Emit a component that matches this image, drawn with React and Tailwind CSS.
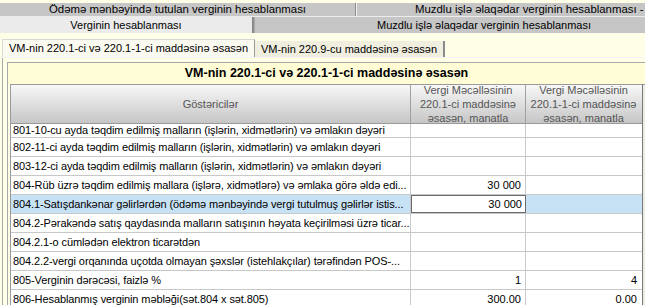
import React from "react";

const rows = [
  { label: "801-10-cu ayda təqdim edilmiş malların (işlərin, xidmətlərin) və əmlakın dəyəri", a: "", b: "", first: true },
  { label: "802-11-ci ayda təqdim edilmiş malların (işlərin, xidmətlərin) və əmlakın dəyəri", a: "", b: "" },
  { label: "803-12-ci ayda təqdim edilmiş malların (işlərin, xidmətlərin) və əmlakın dəyəri", a: "", b: "" },
  { label: "804-Rüb üzrə təqdim edilmiş mallara (işlərə, xidmətlərə) və əmlaka görə əldə edi...", a: "30 000", b: "" },
  { label: "804.1-Satışdankənar gəlirlərdən (ödəmə mənbəyində vergi tutulmuş gəlirlər istis...", a: "30 000", b: "", selected: true },
  { label: "804.2-Pərakəndə satış qaydasında malların satışının həyata keçirilməsi üzrə ticar...", a: "", b: "" },
  { label: "804.2.1-o cümlədən elektron ticarətdən", a: "", b: "" },
  { label: "804.2.2-vergi orqanında uçotda olmayan şəxslər (istehlakçılar) tərəfindən POS-...", a: "", b: "" },
  { label: "805-Verginin dərəcəsi, faizlə %", a: "1", b: "4" },
  { label: "806-Hesablanmış verginin məbləği(sət.804 x sət.805)", a: "300.00", b: "0.00" },
];

function GridRow({ row }) {
  const bg = row.selected ? "bg-[#c8e2f5]" : "bg-white";
  return (
    <div className={`flex ${row.first ? "h-[14px]" : "h-[19px]"} border-b border-[#c8c8c8] ${bg}`}>
      <div className="w-[400px] shrink-0 border-r border-[#c8c8c8] pl-[2px] flex items-center overflow-hidden whitespace-nowrap tracking-[-0.1px]">
        {row.label}
      </div>
      {row.selected ? (
        <div className="w-[115px] shrink-0 flex items-center justify-end pr-[3px] bg-white border border-[#6a6a6a]">
          {row.a}
        </div>
      ) : (
        <div className="w-[115px] shrink-0 border-r border-[#c8c8c8] flex items-center justify-end pr-[4px]">
          {row.a}
        </div>
      )}
      <div className="w-[115px] shrink-0 flex items-center justify-end pr-[4px]">{row.b}</div>
    </div>
  );
}

export default function App() {
  return (
    <div
      className="w-[645px] h-[305px] overflow-hidden bg-[#fffee6] text-[11px] text-black flex flex-col"
      style={{ fontFamily: "Tahoma, 'Liberation Sans', Arial, sans-serif" }}
    >
      {/* outer tabs, row 1 */}
      <div className="h-[3px] shrink-0" />
      <div className="flex h-[13px] shrink-0 bg-[#c6c6c6] leading-[13px] text-[11.4px] whitespace-nowrap overflow-hidden">
        <div className="w-[355px] shrink-0 text-center">Ödəmə mənbəyində tutulan verginin hesablanması</div>
        <div className="w-[1px] shrink-0 bg-[#8c8c8c]" />
        <div className="w-[1px] shrink-0 bg-[#f2f2f2]" />
        <div className="flex-1 pl-[58px] overflow-hidden">Muzdlu işlə əlaqədar verginin hesablanması - yer</div>
      </div>

      {/* outer tabs, row 2 */}
      <div className="flex h-[17px] shrink-0 border-t border-[#ececec] leading-[16px] whitespace-nowrap overflow-hidden">
        <div className="w-[252px] shrink-0 bg-[#ebebeb] text-center">Verginin hesablanması</div>
        <div className="w-[3px] shrink-0 bg-linear-to-r from-[#7a7a7a] to-[#b0b0b0]" />
        <div className="flex-1 bg-[#c6c6c6] pl-[122px]">Muzdlu işlə əlaqədar verginin hesablanması</div>
      </div>

      <div className="h-[7px] shrink-0" />

      {/* inner tabs */}
      <div className="flex items-end h-[18px] shrink-0 pl-[2px] border-b border-[#f4f4f4] whitespace-nowrap">
        <div className="w-[253px] h-[18px] shrink-0 bg-[#fbfaf1] border-t border-l border-[#d8d8d8] border-r border-r-[#9a9a9a] flex items-center justify-center">
          VM-nin 220.1-ci və 220.1-1-ci maddəsinə əsasən
        </div>
        <div className="w-[190px] h-[16px] shrink-0 bg-[#efeedf] border-r-2 border-[#8a8a8a] flex items-center justify-center">
          VM-nin 220.9-cu maddəsinə əsasən
        </div>
      </div>

      {/* tab page */}
      <div className="flex-1 ml-[2px] border-l border-[#a8a8a8] pl-[4px] pt-[4px] min-h-0">
        <div className="border-l border-t border-[#a8a8a8] h-full flex flex-col">
          <div className="h-[21px] shrink-0 bg-[#fffcd6] flex items-center justify-center font-bold text-[12.5px] whitespace-nowrap">
            VM-nin 220.1-ci və 220.1-1-ci maddəsinə əsasən
          </div>
          <div className="flex flex-1 min-h-0 pl-[2px]">
            <div className="w-[632px] shrink-0 border-l border-t border-[#9a9a9a] overflow-hidden">
              {/* header */}
              <div className="flex h-[39px] bg-linear-to-b from-[#f8f8f8] to-[#c6c6c6] text-[#555] border-b border-[#9a9a9a]">
                <div className="w-[400px] shrink-0 border-r border-[#a0a0a0] flex items-center justify-center">
                  Göstəricilər
                </div>
                <div className="w-[115px] shrink-0 border-r border-[#a0a0a0] flex flex-col items-center justify-center leading-[14px]">
                  <span>Vergi Məcəlləsinin</span>
                  <span>220.1-ci maddəsinə</span>
                  <span>əsasən, manatla</span>
                </div>
                <div className="w-[115px] shrink-0 flex flex-col items-center justify-center leading-[14px]">
                  <span>Vergi Məcəlləsinin</span>
                  <span>220.1-1-ci maddəsinə</span>
                  <span>əsasən, manatla</span>
                </div>
              </div>
              {rows.map((r) => (
                <GridRow key={r.label} row={r} />
              ))}
            </div>
            <div className="flex-1 border-l border-[#7a7a7a] bg-[#ecebe4] border-t border-t-[#9a9a9a]" />
          </div>
        </div>
      </div>
    </div>
  );
}
